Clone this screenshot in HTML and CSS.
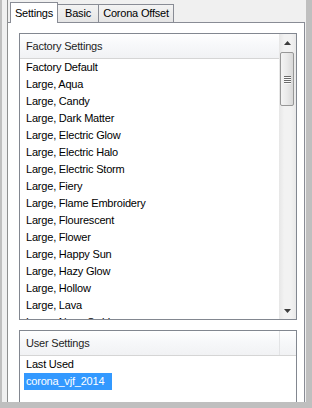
FILE: index.html
```html
<!DOCTYPE html>
<html lang="en">
<head>
  <meta charset="UTF-8" />
  <title>Settings</title>
  <link rel="stylesheet" href="styles.css">
</head>
<body>
  <div class="window">
    <div class="tabctl">
      <div class="tabs">
        <div class="tab active">Settings</div>
        <div class="tab basic">Basic</div>
        <div class="tab offset">Corona Offset</div>
      </div>
      <div class="page">
        <div class="list factory">
          <div class="list-main">
            <div class="list-header"><span class="col">Factory Settings</span></div>
            <ul class="items">
              <li>Factory Default</li>
              <li>Large, Aqua</li>
              <li>Large, Candy</li>
              <li>Large, Dark Matter</li>
              <li>Large, Electric Glow</li>
              <li>Large, Electric Halo</li>
              <li>Large, Electric Storm</li>
              <li>Large, Fiery</li>
              <li>Large, Flame Embroidery</li>
              <li>Large, Flourescent</li>
              <li>Large, Flower</li>
              <li>Large, Happy Sun</li>
              <li>Large, Hazy Glow</li>
              <li>Large, Hollow</li>
              <li>Large, Lava</li>
              <li>Large, Neon Swirl</li>
            </ul>
          </div>
          <div class="scrollbar">
            <div class="arrow">
              <svg width="7" height="4" viewBox="0 0 7 4"><path d="M3.5 0L7 4H0z" fill="#3c3c3c"/></svg>
            </div>
            <div class="track">
              <div class="thumb">
                <div class="grip"><i></i><i></i><i></i><i></i></div>
              </div>
            </div>
            <div class="arrow">
              <svg width="7" height="4" viewBox="0 0 7 4"><path d="M0 0H7L3.5 4z" fill="#3c3c3c"/></svg>
            </div>
          </div>
        </div>

        <div class="list user">
          <div class="list-main">
            <div class="list-header"><span class="col">User Settings</span><span class="filler"></span></div>
            <ul class="items">
              <li>Last Used</li>
              <li><span class="selected">corona_vjf_2014</span></li>
            </ul>
          </div>
        </div>
      </div>
    </div>
  </div>
</body>
</html>
```

FILE: styles.css
```css
html, body {
  margin: 0;
  height: 408px;
  overflow: hidden;
}
body {
  background: #bfbfbf;
  font-family: "Liberation Sans", Arial, sans-serif;
  font-size: 11px;
  letter-spacing: -0.2px;
  color: #000;
}
.window {
  margin-left: 2px;
  width: 304px;
  height: 402px;
  background: #f0f0f0;
  overflow: hidden;
}
.tabctl {
  margin-left: 5px;
  width: 298px;
  height: 402px;
  border-left: 1px solid #8e8f8f;
  box-sizing: border-box;
}

/* tabs */
.tabs {
  display: flex;
  align-items: flex-end;
  height: 22px;
  padding-left: 2px;
}
.tab {
  box-sizing: border-box;
  height: 18px;
  padding-top: 2px;
  text-align: center;
  border: 1px solid #898c95;
  border-bottom: none;
  background: linear-gradient(#f3f3f3, #e5e5e5);
  margin-left: -1px;
}
.tab.active {
  position: relative;
  z-index: 1;
  width: 48px;
  height: 21px;
  margin-left: 0;
  margin-bottom: -1px;
  padding-top: 4px;
  background: #fff;
}
.tab.basic { width: 42px; }
.tab.offset { width: 76px; }

/* page */
.page {
  height: 380px;
  background: #fff;
  border-top: 1px solid #898c95;
  border-right: 1px solid #898c95;
  padding: 10px 7px 0 11px;
}

/* list views */
.list {
  display: flex;
  border: 1px solid #828790;
  background: #fff;
}
.list.factory { height: 285px; }
.list.user {
  margin-top: 10px;
  height: 100px;
}
.list-main {
  flex: 1;
  overflow: hidden;
}
.list-header {
  display: flex;
  height: 24px;
  line-height: 24px;
  border-bottom: 1px solid #d5d5d5;
  background: linear-gradient(#ffffff, #f7f8fa 45%, #f1f2f4);
}
.list-header .col {
  flex: 1;
  padding-left: 6px;
  color: #1e1e1e;
}
.user .list-header .col {
  flex: none;
  width: 253px;
  border-right: 1px solid #e3e4e6;
}
.list-header .filler { flex: 1; }
.items {
  list-style: none;
  margin: 0;
  padding: 0;
}
.items li {
  height: 17px;
  line-height: 17px;
  padding-left: 6px;
  white-space: nowrap;
}
.user .items li { padding-left: 4px; }
.user .items li:first-child { padding-left: 6px; }
.selected {
  display: inline-block;
  height: 17px;
  padding: 0 8px 0 2px;
  background: #3399ff;
  color: #fff;
}

/* scrollbar */
.scrollbar {
  display: flex;
  flex-direction: column;
  width: 17px;
  background: linear-gradient(90deg, #e6e6e6, #f2f2f2 30%, #f2f2f2 70%, #e9e9e9);
}
.arrow {
  height: 17px;
  display: flex;
  align-items: center;
  justify-content: center;
}
.track {
  flex: 1;
  padding: 1px 2px 0 1px;
}
.thumb {
  height: 54px;
  box-sizing: border-box;
  border: 1px solid #979797;
  border-radius: 2px;
  background: linear-gradient(90deg, #f4f4f4, #e9e9e9 50%, #d9d9d9);
  display: flex;
  align-items: center;
  justify-content: center;
}
.grip {
  display: flex;
  flex-direction: column;
  gap: 1px;
}
.grip i {
  display: block;
  width: 7px;
  height: 1px;
  background: #6a6a6a;
  border-bottom: 1px solid #fafafa;
  margin-bottom: -1px;
}
```
